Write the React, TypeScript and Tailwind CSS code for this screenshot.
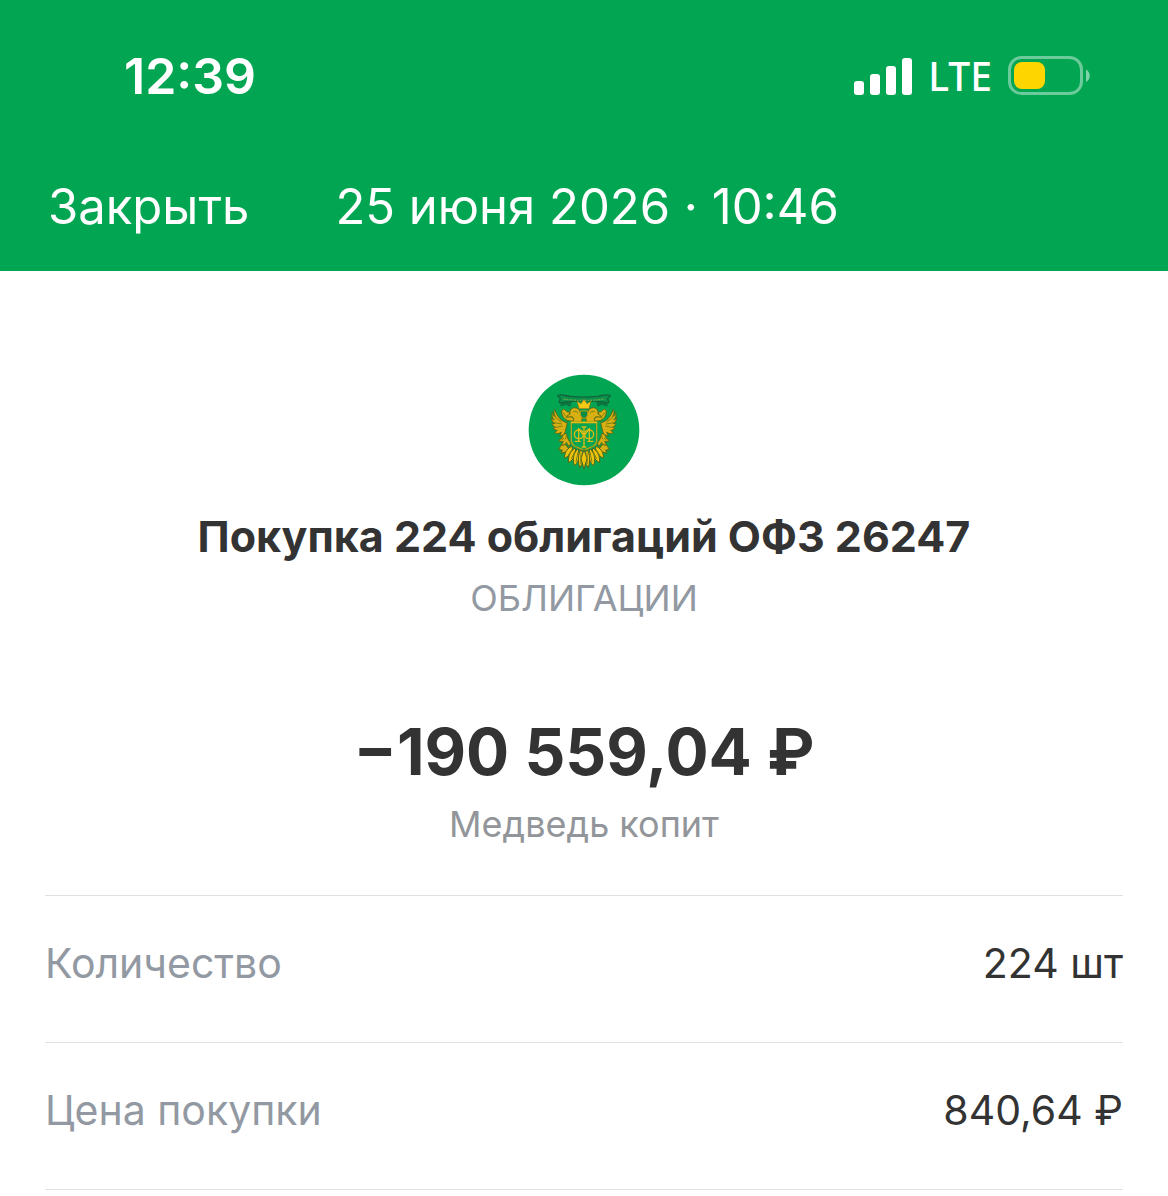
const rows = [
  { label: "Количество", value: "224 шт" },
  { label: "Цена покупки", value: "840,64 ₽" },
];

function StatusBar() {
  return (
    <div className="flex h-[152px] items-center justify-between pl-[124px] pr-[78px]">
      <time className="text-[50px] leading-[60px] font-semibold">12:39</time>
      <div className="flex items-center gap-4">
        <svg viewBox="0 0 58 37" className="h-[37px] w-[58px]" fill="white" aria-hidden="true">
          <rect x="0" y="23" width="10" height="14" rx="3" />
          <rect x="16" y="16" width="10" height="21" rx="3" />
          <rect x="32" y="8" width="10" height="29" rx="3" />
          <rect x="48" y="0" width="10" height="37" rx="3" />
        </svg>
        <span className="font-['Noto_Sans',sans-serif] text-[39px] leading-[56px] font-medium">LTE</span>
        <svg viewBox="0 0 82 40" className="h-10 w-[82px]" aria-hidden="true">
          <rect x="1.5" y="1.5" width="72" height="36" rx="12" fill="none" stroke="white" strokeOpacity=".42" strokeWidth="3" />
          <path d="M78 13.500c5 3 5 9.500 0 12.500z" fill="white" fillOpacity=".5" />
          <rect x="6" y="6" width="31" height="27" rx="8" fill="#ffd500" />
        </svg>
      </div>
    </div>
  );
}

function EagleHalf() {
  return (
    <g>
      <g fill="#d9b014" stroke="#5b6a14" strokeWidth="3" strokeLinejoin="round">
        <path d="M130 158C114 156 100 142 92 118c-4 9-2 15 2 22-6-3-8-8-9-14-3 10 0 18 6 24-6-2-8-5-9-8 0 9 4 15 10 19l-8-2c1 7 5 11 11 13l-8 2c3 5 8 7 13 7l-8 7c6 4 14 3 20-1l-5 11c10 0 15-6 17-14z" />
        <path d="M132 152c-8-3-20-12-19-28 3-8 8-7 12-2 4 4 8 5 12 3-1 10 4 17 12 20l2 9z" />
        <path d="M138 132c-2-10 4-18 13-19 9 0 16 5 17 12l8 17-4 14h-26c6-8 3-14-3-16l-15 2 3-6z" />
        <path d="M126 190c-7 2-12 7-12 14l-10 7c4 4 10 5 14 3l-6 12c8 2 14-3 15-9l8 13 5-10-7-11z" />
        <path d="M111 226l-7 13 11 1-4 10 13-4 6 7 4-17-9-12z" />
      </g>
      <g fill="#f0c40d" stroke="#52651a" strokeWidth="3">
        <path d="M145 229c-14 4-22 16-24 34 11-1 19-9 24-21z" />
        <path d="M154 234c-15 9-22 24-21 43 11-3 19-15 22-30z" />
        <path d="M162 236c-14 14-17 30-11 51 11-8 15-22 14-38z" />
        <path d="M171 238c-9 15-10 34-4 55 9-11 12-25 10-42z" />
      </g>
      <g fill="none" stroke="#7f8212" strokeWidth="3">
        <path d="M94 142l18 14M90 158l24 4M97 172l19-4M116 127l14 17M148 125c7-3 12 0 14 5M120 204l-7 7M128 195l-4 13" />
        <path d="M145 237l-13 20M153 243l-11 24M162 246l-6 30M171 249l-1 32" />
      </g>
    </g>
  );
}

function BondEmblem() {
  return (
    <svg viewBox="12 12 336 336" className="size-28" role="img" aria-label="ОФЗ">
      <circle cx="180" cy="180" r="166" fill="#02a652" />
      <path d="M114 86l-4 22 16-5 12 6 4-14zM246 86l4 22-16-5-12 6-4-14z" fill="#08763f" stroke="#12653a" strokeWidth="2" />
      <path d="M101 77c13-7 24 1 37 2 28 3 56 3 84 0 13-1 24-9 37-2l-8 9 4 11c-10 3-19-2-29-2-29-3-63-3-92 0-10 0-19 5-29 2l4-11z" fill="#0c8f4b" stroke="#12653a" strokeWidth="4" strokeLinejoin="round" />
      <path d="M119 87c40 6 82 6 122 0" fill="none" stroke="#67af4c" strokeWidth="4" strokeDasharray="5 3" />
      <EagleHalf />
      <g transform="matrix(-1 0 0 1 360 0)">
        <EagleHalf />
      </g>
      <path d="M165 116l-6-23 12 8 9-13 9 13 12-8-6 23z" fill="#f5c915" stroke="#876f16" strokeWidth="2" />
      <path d="M169 123h22v9c0 7-4 11-11 14-7-3-11-7-11-14z" fill="#078b45" stroke="#b69b12" strokeWidth="3" />
      <path d="M142 158h76v54c0 15-18 20-38 28-20-8-38-13-38-28z" fill="#02a652" stroke="#b9a318" strokeWidth="4" />
      <path d="M140 157h80" stroke="#e6bd12" strokeWidth="5" />
      <g fill="none" stroke="#e0ba14" strokeWidth="4">
        <path d="M180 171v60M173 171h14M173 231h14M164 174v40M196 174v40M152 214h18M190 214h18M164 176l16 22 16-22" />
        <ellipse cx="165" cy="193" rx="14" ry="13" />
        <ellipse cx="195" cy="193" rx="14" ry="13" />
      </g>
      <path d="M180 238l9 28-9 31-9-31z" fill="#f0c40d" stroke="#52651a" strokeWidth="3" />
    </svg>
  );
}

export default function App() {
  return (
    <main className="min-h-screen bg-white font-['Inter',sans-serif] text-[#333333]">
      <header className="bg-[#02a652] text-white">
        <StatusBar />
        <div className="flex h-[119px] items-center gap-[86px] px-12 pb-[10px]">
          <button type="button" className="text-[49px] leading-[60px]">Закрыть</button>
          <h1 className="text-[49px] leading-[60px]">25 июня 2026 · 10:46</h1>
        </div>
      </header>
      <section className="flex flex-col items-center pt-[103px] text-center">
        <BondEmblem />
        <h2 className="mt-6 text-[43px] leading-[52px] font-bold">Покупка 224 облигаций ОФЗ 26247</h2>
        <p className="mt-3 text-[36px] leading-[48px] text-[#9299a2]">ОБЛИГАЦИИ</p>
        <p className="mt-[90px] text-[64px] leading-[80px] font-bold">−190 559,04 ₽</p>
        <p className="mt-2 text-[36px] leading-[48px] text-[#929599]">Медведь копит</p>
      </section>
      <dl className="mx-[45px] mt-[47px] border-t border-[#e0e0e0]">
        {rows.map((r) => (
          <div key={r.label} className="flex h-[147px] items-center justify-between border-b border-[#e0e0e0] pb-[10px] text-[41px]">
            <dt className="text-[#9299a2]">{r.label}</dt>
            <dd>{r.value}</dd>
          </div>
        ))}
      </dl>
    </main>
  );
}
